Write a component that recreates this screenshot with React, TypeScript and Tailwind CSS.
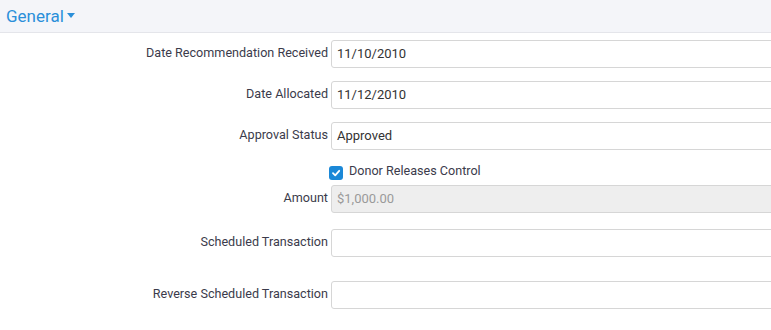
import React from "react";

const font = { fontFamily: "Roboto, 'Liberation Sans', sans-serif" };

type RowProps = {
  label: string;
  value?: string;
  disabled?: boolean;
  className?: string;
};

const Row = ({ label, value = "", disabled, className = "" }: RowProps) => (
  <div className={`flex items-start ${className}`}>
    <label className="w-[331px] shrink-0 pr-[3px] pt-[5px] text-right text-[12.6px] leading-[16px] text-[#3b3b4b]">
      {label}
    </label>
    <div
      className={`h-[28px] flex-1 -mr-[10px] rounded-[3px] border border-[#d6d6d6] px-[5px] text-[13px] leading-[26px] ${
        disabled ? "bg-[#eeeeee] text-[#9a9a9a]" : "bg-white text-[#333]"
      }`}
    >
      {value}
    </div>
  </div>
);

export default function App() {
  return (
    <div className="w-[771px] h-[330px] overflow-hidden bg-white" style={font}>
      <div className="h-[33px] bg-[#f4f5f9] border-b border-[#e4e5ea] flex items-center pl-[6px]">
        <span className="text-[17px] text-[#2a8fd9] leading-none">General</span>
        <svg width="8" height="6" viewBox="0 0 8 6" className="ml-[3px]">
          <path d="M0 0 H8 L4 5 Z" fill="#2a8fd9" />
        </svg>
      </div>
      <Row className="mt-[7px]" label="Date Recommendation Received" value="11/10/2010" />
      <Row className="mt-[13px]" label="Date Allocated" value="11/12/2010" />
      <Row className="mt-[13px]" label="Approval Status" value="Approved" />
      <div className="mt-[13px] flex h-[20px] items-center pl-[329px]">
        <span className="flex h-[14px] w-[14px] items-center justify-center rounded-[3px] bg-[#1b88d7]">
          <svg width="10" height="10" viewBox="0 0 10 10">
            <path d="M2 5.2 L4.2 7.3 L8.2 2.8" stroke="#fff" strokeWidth="1.8" fill="none" strokeLinecap="round" strokeLinejoin="round" />
          </svg>
        </span>
        <span className="ml-[6px] -mt-[4px] text-[12.6px] text-[#3b3b4b]">Donor Releases Control</span>
      </div>
      <Row className="mt-[2px]" label="Amount" value="$1,000.00" disabled />
      <Row className="mt-[16px]" label="Scheduled Transaction" />
      <Row className="mt-[24px]" label="Reverse Scheduled Transaction" />
    </div>
  );
}
